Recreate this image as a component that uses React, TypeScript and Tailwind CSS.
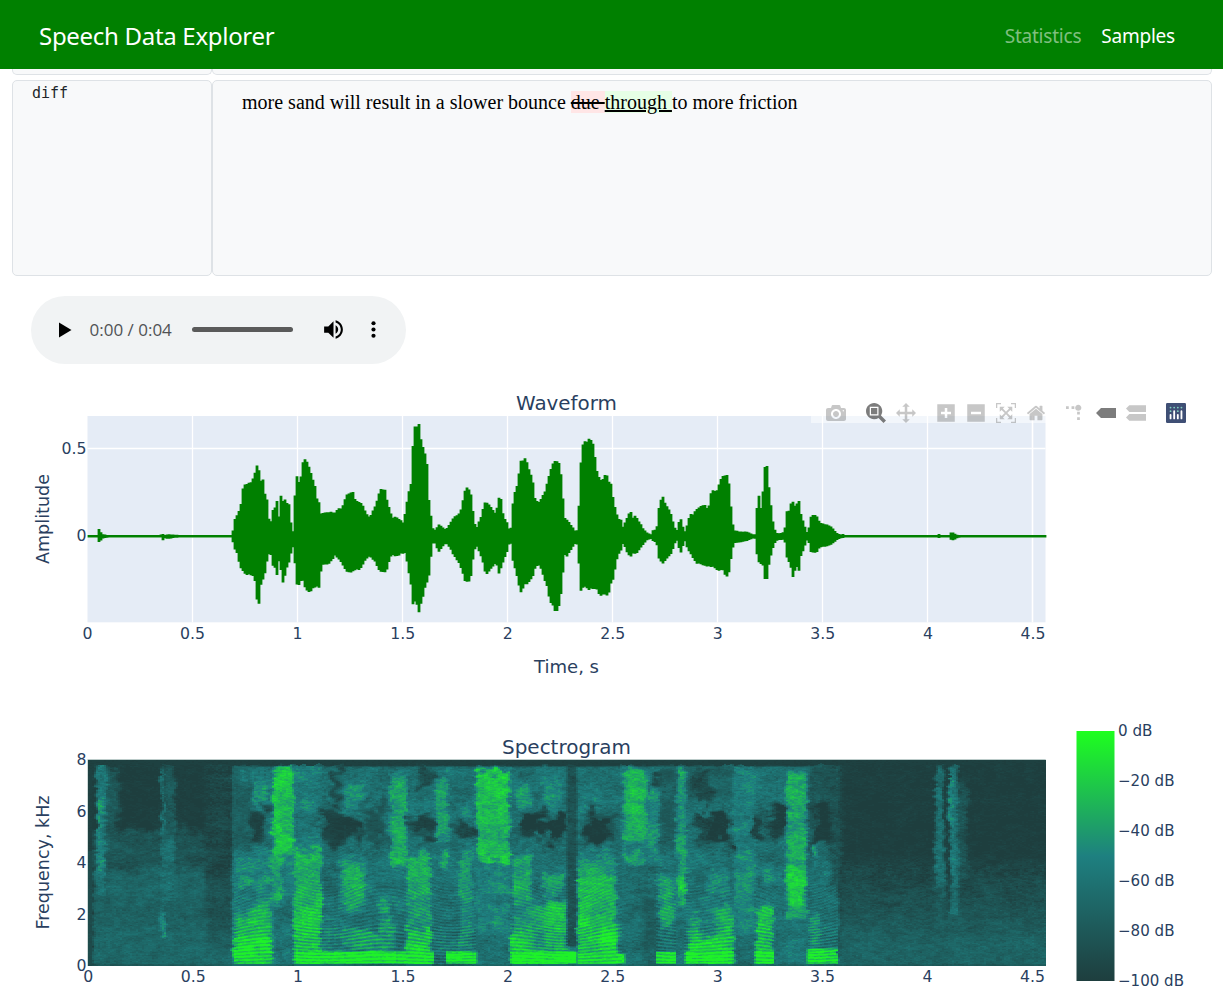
import { useMemo } from "react";

type Box = [number, number, number, number, number, number, number];

const PLOT_LEFT = 88;
const PLOT_RIGHT = 1046;
const INK = "#2a3f5f";
const PLOT_FONT = '"DejaVu Sans", Verdana, sans-serif';

/* Envelope of the signal: position, peak above zero, peak below zero (thirds of a pixel). */
const ENVELOPE = [
  -396, 3, 3, -369, 3, 3, -366, 22, 14, -359, 22, 20, -356, 7, 8, -345, 5, 5, -330, 3, 3, -178, 3, 3, -175, 9, 6, -172, 7, 13, -165, 4, 6, -155, 6, 8, -140, 5, 5, -110, 3, 3,
  0, 3, 3, 36, 3, 3, 38, 8, 12, 42, 46, 35, 50, 60, 45, 62, 85, 95, 68, 140, 100, 76, 155, 112, 88, 160, 115, 98, 168, 115, 104, 180, 120, 108, 212, 180, 115, 218, 205, 119, 175, 190,
  122, 168, 150, 130, 172, 125, 136, 115, 105, 142, 110, 70, 148, 40, 50, 153, 45, 55, 156, 75, 85, 164, 80, 88, 168, 105, 110, 173, 105, 120, 177, 60, 75, 183, 118, 100, 187, 120, 150,
  192, 85, 120, 196, 115, 115, 200, 100, 92, 206, 105, 85, 210, 60, 55, 217, 15, 45, 221, 15, 20, 226, 145, 95, 230, 178, 140, 235, 170, 158, 240, 155, 130, 248, 215, 132, 257, 228, 155,
  264, 210, 162, 270, 205, 170, 276, 175, 160, 283, 160, 150, 290, 115, 152, 297, 100, 150, 300, 68, 115, 310, 68, 82, 322, 72, 85, 335, 72, 72, 345, 70, 58, 355, 82, 65, 366, 85, 80,
  372, 100, 90, 378, 120, 102, 390, 130, 107, 400, 130, 103, 406, 108, 100, 420, 102, 98, 428, 92, 85, 436, 75, 70, 445, 58, 60, 452, 62, 62, 460, 80, 70, 468, 95, 80, 476, 125, 98,
  483, 140, 107, 495, 140, 107, 502, 105, 95, 510, 75, 65, 518, 55, 55, 525, 58, 58, 535, 53, 60, 545, 45, 50, 550, 40, 52, 556, 70, 50, 562, 110, 80, 568, 140, 115, 574, 160, 150,
  578, 230, 200, 580, 310, 208, 586, 325, 195, 592, 330, 205, 598, 330, 228, 603, 290, 200, 610, 260, 175, 616, 240, 150, 622, 205, 138, 627, 110, 115, 633, 60, 60, 640, 18, 15,
  648, 20, 25, 655, 35, 50, 660, 33, 40, 678, 20, 20, 690, 38, 35, 700, 55, 55, 715, 65, 75, 725, 85, 100, 733, 125, 125, 738, 145, 138, 748, 140, 135, 754, 120, 115, 760, 65, 60,
  768, 20, 25, 775, 40, 40, 785, 60, 65, 793, 100, 90, 797, 102, 120, 805, 98, 105, 817, 80, 90, 827, 68, 82, 833, 95, 90, 838, 122, 118, 843, 110, 95, 850, 60, 75, 860, 45, 50,
  868, 20, 20, 872, 12, 12, 878, 90, 70, 885, 130, 95, 892, 155, 120, 898, 195, 150, 902, 228, 165, 915, 228, 145, 922, 215, 140, 930, 195, 130, 938, 165, 120, 945, 115, 95,
  955, 97, 85, 965, 115, 100, 973, 130, 130, 980, 150, 145, 990, 190, 190, 998, 210, 205, 1005, 225, 220, 1013, 226, 225, 1020, 215, 200, 1026, 160, 145, 1031, 80, 85, 1035, 55, 55,
  1040, 50, 62, 1050, 38, 45, 1060, 25, 30, 1070, 10, 15, 1075, 50, 60, 1080, 150, 110, 1084, 240, 178, 1088, 265, 155, 1095, 288, 150, 1105, 285, 160, 1117, 285, 155, 1125, 240, 157,
  1132, 190, 155, 1138, 170, 172, 1148, 165, 175, 1157, 190, 175, 1165, 165, 178, 1173, 155, 138, 1180, 110, 125, 1188, 75, 80, 1195, 50, 55, 1202, 52, 45, 1210, 25, 20, 1218, 50, 40,
  1225, 62, 55, 1231, 80, 62, 1238, 55, 52, 1248, 62, 52, 1255, 45, 45, 1262, 38, 35, 1270, 22, 25, 1280, 12, 12, 1293, 6, 8, 1300, 20, 15, 1310, 18, 18, 1315, 75, 60, 1320, 102, 72,
  1329, 118, 82, 1336, 98, 72, 1345, 85, 62, 1355, 60, 50, 1363, 30, 25, 1370, 15, 10, 1376, 38, 30, 1381, 60, 58, 1386, 35, 35, 1395, 15, 15, 1402, 35, 35, 1410, 65, 50,
  1420, 65, 65, 1428, 80, 80, 1440, 88, 82, 1452, 95, 88, 1465, 80, 90, 1473, 130, 90, 1480, 140, 92, 1490, 135, 100, 1500, 165, 102, 1508, 180, 98, 1516, 180, 118, 1524, 185, 120,
  1530, 125, 90, 1536, 50, 45, 1542, 18, 20, 1560, 14, 18, 1580, 14, 14, 1600, 6, 6, 1608, 6, 8, 1612, 110, 70, 1618, 125, 78, 1622, 70, 80, 1626, 130, 85, 1632, 140, 90,
  1635, 210, 125, 1641, 212, 128, 1644, 165, 100, 1650, 125, 68, 1656, 60, 45, 1663, 22, 22, 1672, 8, 12, 1690, 12, 10, 1696, 30, 20, 1700, 75, 60, 1708, 75, 80, 1716, 112, 100,
  1721, 95, 132, 1728, 90, 80, 1736, 112, 110, 1742, 70, 60, 1750, 45, 42, 1760, 12, 12, 1766, 20, 15, 1774, 65, 50, 1790, 62, 48, 1800, 40, 32, 1820, 35, 30, 1835, 28, 24,
  1850, 10, 12, 1860, 5, 6, 1868, 7, 5, 1875, 3, 3, 2140, 3, 3, 2151, 3, 3, 2156, 8, 6, 2160, 3, 3, 2190, 4, 4, 2194, 14, 12, 2202, 9, 11, 2212, 4, 5, 2225, 3, 3, 2480, 3, 3,
];

/* Regions of the spectrogram: left, right, top, bottom, level, horizontal and vertical softness. */
const REGIONS: Box[] = [
  [93, 233, 830, 862, 0.17, 8, 8],
  [93, 233, 868, 970, 0.26, 4, 14],
  [110, 205, 868, 905, 0.3, 10, 8],
  [93, 233, 925, 970, 0.31, 4, 10],
  [205, 233, 760, 890, 0.07, 6, 6],
  [207, 232, 880, 940, 0.15, 6, 14],
  [98, 117, 765, 850, 0.2, 5, 6],
  [97, 106, 764, 892, 0.42, 3, 6],
  [98, 102, 800, 824, 0.6, 2, 4],
  [98, 104, 848, 875, 0.5, 2, 4],
  [166, 175, 766, 840, 0.2, 3, 6],
  [162, 175, 835, 900, 0.36, 3, 6],
  [161, 165, 768, 938, 0.36, 2, 6],
  [161, 165, 914, 932, 0.56, 2, 4],
  [233, 838, 766, 972, 0.37, 3, 3],
  [233, 256, 766, 850, 0.26, 3, 8],
  [233, 272, 850, 970, 0.46, 3, 6],
  [243, 270, 772, 790, 0.42, 4, 4],
  [253, 268, 787, 806, 0.56, 4, 5],
  [253, 267, 808, 840, 0.04, 5, 7],
  [240, 270, 876, 890, 0.58, 4, 5],
  [236, 272, 915, 972, 0.65, 6, 8],
  [250, 272, 905, 940, 0.72, 8, 8],
  [233, 272, 940, 964, 0.86, 2, 6],
  [273, 294, 764, 866, 0.76, 3, 5],
  [271, 282, 855, 905, 0.64, 3, 8],
  [282, 294, 855, 900, 0.48, 3, 8],
  [294, 322, 764, 850, 0.44, 4, 6],
  [294, 322, 850, 970, 0.68, 3, 6],
  [294, 322, 905, 950, 0.76, 3, 6],
  [322, 342, 765, 970, 0.35, 3, 6],
  [322, 342, 918, 970, 0.48, 3, 6],
  [322, 343, 806, 842, 0.05, 6, 6],
  [335, 360, 818, 837, 0.02, 6, 5],
  [330, 340, 768, 800, 0.1, 5, 6],
  [344, 365, 785, 808, 0.55, 4, 6],
  [340, 365, 858, 906, 0.64, 5, 8],
  [340, 396, 928, 950, 0.62, 4, 6],
  [365, 385, 804, 840, 0.15, 6, 6],
  [378, 390, 895, 950, 0.6, 4, 8],
  [390, 407, 773, 865, 0.64, 3, 5],
  [407, 430, 853, 900, 0.66, 3, 6],
  [407, 431, 900, 970, 0.58, 3, 6],
  [406, 432, 928, 964, 0.82, 3, 5],
  [413, 434, 816, 838, 0.04, 6, 5],
  [416, 434, 765, 784, 0.1, 5, 5],
  [436, 449, 772, 840, 0.6, 3, 5],
  [436, 449, 854, 866, 0.62, 3, 4],
  [457, 473, 820, 839, 0.06, 6, 5],
  [460, 473, 850, 950, 0.55, 4, 6],
  [461, 472, 798, 812, 0.53, 4, 5],
  [476, 510, 768, 861, 0.75, 3, 4],
  [476, 510, 862, 930, 0.5, 3, 6],
  [434, 446, 945, 970, 0.35, 3, 5],
  [478, 511, 938, 972, 0.34, 3, 8],
  [512, 532, 852, 905, 0.66, 4, 6],
  [516, 530, 785, 808, 0.54, 4, 6],
  [512, 567, 905, 965, 0.6, 3, 8],
  [543, 562, 771, 809, 0.54, 4, 6],
  [521, 572, 815, 830, -0.1, 6, 5],
  [545, 562, 826, 842, -0.1, 5, 5],
  [526, 536, 826, 840, 0.02, 4, 5],
  [542, 563, 872, 892, 0.63, 4, 6],
  [545, 566, 905, 950, 0.73, 6, 8],
  [512, 532, 936, 962, 0.8, 3, 6],
  [567, 577, 764, 946, 0.14, 3, 3],
  [578, 617, 852, 972, 0.56, 3, 10],
  [578, 615, 872, 965, 0.68, 3, 8],
  [579, 590, 900, 925, 0.82, 4, 6],
  [600, 618, 925, 960, 0.84, 5, 6],
  [583, 612, 814, 842, 0, 6, 6],
  [580, 600, 795, 808, 0.52, 5, 5],
  [623, 647, 769, 862, 0.64, 4, 5],
  [630, 644, 787, 830, 0.73, 4, 6],
  [625, 658, 840, 852, 0.42, 4, 5],
  [623, 656, 864, 972, 0.35, 4, 6],
  [647, 659, 790, 860, 0.54, 4, 8],
  [648, 665, 767, 783, 0.1, 5, 4],
  [644, 656, 897, 950, 0.24, 5, 8],
  [659, 676, 764, 850, 0.24, 4, 8],
  [658, 674, 875, 930, 0.61, 4, 8],
  [677, 686, 768, 906, 0.6, 3, 6],
  [679, 686, 872, 900, 0.72, 3, 5],
  [687, 733, 764, 800, 0.27, 4, 6],
  [695, 712, 766, 806, 0.06, 6, 6],
  [698, 732, 814, 843, 0.07, 7, 6],
  [712, 731, 816, 841, -0.08, 5, 5],
  [708, 728, 873, 892, 0.55, 5, 6],
  [687, 733, 904, 960, 0.48, 4, 6],
  [690, 700, 915, 950, 0.68, 5, 8],
  [716, 733, 908, 960, 0.72, 6, 10],
  [690, 733, 938, 963, 0.78, 4, 6],
  [734, 755, 765, 936, 0.47, 3, 6],
  [736, 752, 850, 930, 0.54, 4, 8],
  [734, 755, 938, 972, 0.33, 3, 6],
  [756, 766, 814, 842, 0.05, 4, 6],
  [769, 782, 804, 842, 0.02, 4, 6],
  [762, 782, 870, 886, 0.57, 4, 6],
  [756, 773, 905, 965, 0.72, 3, 8],
  [774, 786, 910, 972, 0.33, 3, 6],
  [786, 807, 771, 922, 0.62, 3, 5],
  [788, 805, 865, 902, 0.8, 4, 6],
  [786, 807, 925, 970, 0.38, 3, 5],
  [808, 838, 764, 860, 0.18, 4, 6],
  [814, 834, 803, 843, -0.05, 5, 5],
  [813, 820, 842, 858, 0.57, 3, 4],
  [818, 840, 845, 860, 0.3, 4, 5],
  [830, 840, 760, 910, 0.14, 8, 12],
  [808, 838, 890, 970, 0.38, 6, 8],
  [810, 820, 916, 945, 0.56, 3, 6],
  [295, 397, 951, 963, 0.9, 2, 2],
  [397, 434, 951, 963, 0.88, 2, 2],
  [446, 477, 951, 963, 0.88, 2, 2],
  [511, 577, 951, 963, 0.92, 2, 2],
  [578, 625, 953, 963, 0.88, 2, 3],
  [656, 676, 951, 963, 0.88, 2, 2],
  [685, 733, 951, 963, 0.9, 2, 2],
  [755, 774, 950, 963, 0.88, 2, 2],
  [807, 838, 948, 963, 0.88, 3, 3],
  [838, 842, 957, 964, 0.6, 3, 3],
  [842, 1050, 870, 972, 0.12, 6, 30],
  [840, 1050, 912, 972, 0.22, 4, 24],
  [840, 1050, 936, 972, 0.28, 4, 12],
  [935, 944, 765, 892, 0.36, 3, 5],
  [936, 943, 890, 940, 0.24, 3, 8],
  [950, 967, 780, 875, 0.18, 4, 12],
  [950, 958, 764, 918, 0.38, 3, 5],
  [950, 953, 775, 822, 0.54, 2, 5],
  [950, 955, 850, 870, 0.45, 2, 5],
];

const VOICED: [number, number][] = [
  [235, 272], [293, 475], [511, 567], [578, 622], [657, 676], [685, 733], [755, 774], [808, 838],
];

function hash(a: number, b: number) {
  let h = Math.imul(a + 1013, 374761393) ^ Math.imul(b + 77, 668265263);
  h = Math.imul(h ^ (h >>> 13), 1274126177);
  return ((h ^ (h >>> 16)) >>> 0) / 4294967296;
}

function smoothNoise(x: number, y: number) {
  const xi = Math.floor(x), yi = Math.floor(y);
  const fx = x - xi, fy = y - yi;
  const top = hash(xi, yi) * (1 - fx) + hash(xi + 1, yi) * fx;
  const low = hash(xi, yi + 1) * (1 - fx) + hash(xi + 1, yi + 1) * fx;
  return top * (1 - fy) + low * fy;
}

function ramp(d: number, soft: number) {
  const t = Math.max(0, Math.min(1, d / soft + 0.5));
  return t * t * (3 - 2 * t);
}

function levelColor(t: number) {
  const mix = (a: number, b: number, k: number) => Math.round(a + (b - a) * k);
  if (t < 0.5) {
    const k = t * 2;
    return `rgb(30,${mix(62, 128, k)},${mix(62, 128, k)})`;
  }
  const k = t * 2 - 1;
  return `rgb(30,${mix(128, 255, k)},${mix(128, 30, k)})`;
}

const LEVELS = 40;

function buildSpectrogram() {
  const paths: string[] = Array.from({ length: LEVELS + 1 }, () => "");
  for (let y = 0; y < 206; y++) {
    let start = 0;
    let last = -1;
    for (let c = 0; c <= 479; c++) {
      let q = -2;
      if (c < 479) {
        const px = PLOT_LEFT + c * 2 + 1;
        const py = 760 + y;
        const nx = smoothNoise(px / 9 + 20, py / 8) - 0.5;
        const ny = smoothNoise(px / 8 + 90, py / 7 + 40) - 0.5;
        const wx = px + (smoothNoise(px / 4, py / 2) - 0.5) * 5;
        const wy = py + (smoothNoise(px / 4 + 50, py / 3) - 0.5) * 9;
        let v = 0.01;
        for (const [l, r, t, b, level, sx0, sy0] of REGIONS) {
          if (px < l - 16 || px > r + 16) continue;
          const flat = sy0 <= 3;
          const patch = level < 0.2 && sy0 > 3 && r < 838 && l > 233;
          const sx = sx0 <= 3 ? sx0 + (flat ? 0 : 2) : sx0 * 1.7;
          const sy = flat ? sy0 : sy0 * 2;
          const xx = flat ? px : wx + (patch ? nx * 16 : nx * 4);
          const yy = flat ? py : wy + (patch ? ny * 20 : ny * 12);
          const m = ramp(xx - l, sx) * ramp(r - xx, sx) * ramp(yy - t, sy) * ramp(b - yy, sy);
          v += (level - v) * m;
        }
        v = Math.max(0, v);
        const fine = hash(c, y) - 0.5;
        const mid = smoothNoise(c / 1.6, y / 1.5 + 300) - 0.5;
        const wide = smoothNoise(c / 5, y / 6 + 900) - 0.5;
        const broad = smoothNoise(c / 9 + 700, y / 14 + 100) - 0.5;
        const gain = v < 0.05 ? 0.3 : v < 0.33 ? 0.7 : 1;
        v += (fine * 0.1 + mid * 0.19 + wide * 0.14) * gain;
        if (px > 235 && px < 836 && v > 0.2) v += broad * 0.14;
        if (py > 845 && VOICED.some(([l, r]) => px >= l && px <= r)) {
          const spacing = 3.35 + 0.35 * Math.sin(px / 19) + 0.2 * Math.sin(px / 47);
          const strength = py > 925 ? 0.12 : py > 885 ? 0.06 : 0.025;
          v += Math.cos(((966 - py) / spacing) * 6.2832) * strength;
        }
        const ceiling = 764 + (smoothNoise(px / 4, 7) - 0.5) * 4;
        if (py < ceiling || px < 93) v = 0.02 + fine * 0.03 + (px < 93 && py > 850 ? 0.08 : 0);
        if (py > 963) v = Math.min(v, 0.45) * 0.75;
        q = Math.round(Math.max(0, Math.min(0.95, v)) * LEVELS);
      }
      if (q !== last) {
        if (last >= 0) paths[last] += `M${start * 2} ${y}h${(c - start) * 2}v1h${(start - c) * 2}z`;
        start = c;
        last = q;
      }
    }
  }
  return paths;
}

function buildWaveform() {
  let d = "";
  let i = 0;
  for (let x = PLOT_LEFT; x < PLOT_RIGHT - 1; x += 2) {
    const pos = (x + 1 - 220) * 3;
    while (i + 3 < ENVELOPE.length - 3 && ENVELOPE[i + 3] < pos) i += 3;
    const k = Math.max(0, Math.min(1, (pos - ENVELOPE[i]) / (ENVELOPE[i + 3] - ENVELOPE[i])));
    const up = ENVELOPE[i + 1] + (ENVELOPE[i + 4] - ENVELOPE[i + 1]) * k;
    const down = ENVELOPE[i + 2] + (ENVELOPE[i + 5] - ENVELOPE[i + 2]) * k;
    const a = Math.max(1.2, (up / 3) * (0.99 + hash(x, 1) * 0.04));
    const b = Math.max(1.2, (down / 3) * (0.99 + hash(x, 2) * 0.04));
    d += `M${x - 0.4} ${(536.3 - a).toFixed(1)}h2.8v${(a + b).toFixed(1)}h-2.8z`;
  }
  return d;
}

function Label({ x, y, size = 15, length, anchor = "middle", rotate, children }: {
  x: number; y: number; size?: number; length?: number; anchor?: "start" | "middle" | "end"; rotate?: boolean; children: string;
}) {
  return (
    <text x={x} y={y} fontSize={size} textAnchor={anchor} fill={INK} fontFamily={PLOT_FONT} textLength={length}
      lengthAdjust="spacingAndGlyphs" transform={rotate ? `rotate(-90 ${x} ${y})` : undefined}>
      {children}
    </text>
  );
}

const TICKS = ["0", "0.5", "1", "1.5", "2", "2.5", "3", "3.5", "4", "4.5"];

function Waveform() {
  const d = useMemo(buildWaveform, []);
  return (
    <svg className="block h-[320px] w-[1223px] shrink-0" viewBox="0 380 1223 320">
      <rect x={87.5} y={416} width={958} height={206.3} fill="#e5ecf6" />
      {TICKS.slice(1).map((t, i) => (
        <path key={t} d={`M${192.5 + i * 105} 416V622.3`} stroke="#fff" strokeWidth={i === 8 ? 1.6 : 1.3} />
      ))}
      <path d="M87.5 448.5H1045.5" stroke="#fff" strokeWidth={1.3} />
      <path d="M87.5 536.5H1045.5" stroke="#fff" strokeWidth={2} />
      <path d={d} fill="#008000" />
      <Label x={566.5} y={409.5} size={20} length={101}>Waveform</Label>
      <Label x={86.5} y={454} length={25} anchor="end">0.5</Label>
      <Label x={86.5} y={541} length={10} anchor="end">0</Label>
      <Label x={49} y={519} size={17} length={90} rotate>Amplitude</Label>
      {TICKS.map((t, i) => (
        <Label key={t} x={87.5 + i * 105.05} y={639} length={t.length > 1 ? 25 : 10}>{t}</Label>
      ))}
      <Label x={566.5} y={673} size={18} length={65}>Time, s</Label>
    </svg>
  );
}

function Spectrogram() {
  const paths = useMemo(buildSpectrogram, []);
  return (
    <svg className="block h-[291px] w-[1223px] shrink-0" viewBox="0 700 1223 291">
      <defs>
        <linearGradient id="scale" x1="0" y1="0" x2="0" y2="1">
          <stop offset="0" stopColor="rgb(30,255,30)" />
          <stop offset="0.5" stopColor="rgb(30,128,128)" />
          <stop offset="1" stopColor="rgb(30,62,62)" />
        </linearGradient>
      </defs>
      <rect x={87.5} y={759.3} width={958.2} height={206.7} fill="#9fb5b3" />
      <g transform="translate(88 760) scale(0.9995 1)" shapeRendering="crispEdges">
        {paths.map((p, i) => (p ? <path key={i} d={p} fill={levelColor(i / LEVELS)} /> : null))}
      </g>
      <Label x={566.5} y={753.5} size={20} length={129}>Spectrogram</Label>
      {["8", "6", "4", "2", "0"].map((t, i) => (
        <Label key={t} x={86.5} y={765 + i * 51.5} length={10} anchor="end">{t}</Label>
      ))}
      <Label x={49} y={862.5} size={17} length={134} rotate>Frequency, kHz</Label>
      {TICKS.map((t, i) => (
        <Label key={t} x={88.3 + i * 104.9} y={982} length={t.length > 1 ? 25 : 10}>{t}</Label>
      ))}
      <rect x={1076.5} y={731} width={38} height={250} fill="url(#scale)" />
      {["0 dB", "−20 dB", "−40 dB", "−60 dB", "−80 dB", "−100 dB"].map((t, i) => (
        <Label key={t} x={1118} y={736 + i * 50} length={i === 0 ? 34.5 : i === 5 ? 66 : 56.5} anchor="start">{t}</Label>
      ))}
    </svg>
  );
}

const FLIP = "matrix(1 0 0 -1 0 850)";
const ICONS = {
  camera: [1000, "m500 450c-83 0-150-67-150-150 0-83 67-150 150-150 83 0 150 67 150 150 0 83-67 150-150 150z m400 150h-120c-16 0-34 13-39 29l-31 93c-6 15-23 28-40 28h-340c-16 0-34-13-39-28l-31-94c-6-15-23-28-40-28h-120c-55 0-100-45-100-100v-450c0-55 45-100 100-100h800c55 0 100 45 100 100v450c0 55-45 100-100 100z m-400-550c-138 0-250 112-250 250 0 138 112 250 250 250 138 0 250-112 250-250 0-138-112-250-250-250z m365 380c-19 0-35 16-35 35 0 19 16 35 35 35 19 0 35-16 35-35 0-19-16-35-35-35z"],
  zoom: [1000, "m1000-25l-250 251c40 63 63 138 63 218 0 224-182 406-407 406-224 0-406-182-406-406s183-406 407-406c80 0 155 22 218 62l250-250 125 125z m-812 250l0 438 437 0 0-438-437 0z m62 375l313 0 0-312-313 0 0 312z"],
  pan: [1000, "m1000 350l-187 188 0-125-250 0 0 250 125 0-188 187-187-187 125 0 0-250-250 0 0 125-188-188 186-187 0 125 252 0 0-250-125 0 187-188 188 188-125 0 0 250 250 0 0-126 187 188z"],
  plus: [875, "m1 787l0-875 875 0 0 875-875 0z m687-500l-187 0 0-187-125 0 0 187-188 0 0 125 188 0 0 187 125 0 0-187 187 0 0-125z"],
  minus: [875, "m0 788l0-876 875 0 0 876-875 0z m688-500l-500 0 0 125 500 0 0-125z"],
  autoscale: [1000, "m250 850l-187 0-63 0 0-62 0-188 63 0 0 188 187 0 0 62z m688 0l-188 0 0-62 188 0 0-188 62 0 0 188 0 62-62 0z m-875-938l0 188-63 0 0-188 0-62 63 0 187 0 0 62-187 0z m875 188l0-188-188 0 0-62 188 0 62 0 0 62 0 188-62 0z m-125 188l-1 0-93-94-156 156 156 156 92-93 2 0 0 250-250 0 0-2 93-92-156-156-156 156 94 92 0 2-250 0 0-250 0 0 93 93 157-156-157-156-93 94 0 0 0-250 250 0 0 0-94 93 156 157 156-157-93-93 0 0 250 0 0 250z"],
  home: [928.6, "m786 296v-267q0-15-11-26t-25-10h-214v214h-143v-214h-214q-15 0-25 10t-11 26v267q0 1 0 2t0 2l321 264 321-264q1-1 1-4z m124 39l-34-41q-5-5-12-6h-2q-7 0-12 3l-386 322-386-322q-7-4-13-4-7 2-12 7l-35 41q-4 5-3 13t6 12l401 334q18 15 42 15t43-15l136-114v109q0 8 5 13t13 5h107q8 0 13-5t5-13v-227l122-102q5-5 6-12t-4-13z"],
  spike: [1000, "M512 409c0-57-46-104-103-104-57 0-104 47-104 104 0 57 47 103 104 103 57 0 103-46 103-103z m-327-39l92 0 0 92-92 0z m-185 0l92 0 0 92-92 0z m370-186l92 0 0 93-92 0z m0-184l92 0 0 92-92 0z"],
  closest: [1500, "m375 725l0 0-375-375 375-374 0-1 1125 0 0 750-1125 0z"],
  compare: [1125, "m187 786l0 2-187-188 188-187 0 0 937 0 0 373-938 0z m0-499l0 1-187-188 188-188 0 0 937 0 0 376-938-1z"],
} as const;

function ModeButton({ name, active }: { name: keyof typeof ICONS; active?: boolean }) {
  const [width, path] = ICONS[name];
  return (
    <span className="flex h-5 w-[30px] items-center justify-center">
      <svg className="size-5" viewBox={`0 0 ${width} 1000`} fill={active ? "rgba(68,68,68,0.7)" : "rgba(68,68,68,0.3)"}>
        <path d={path} transform={name === "spike" ? "matrix(1.5 0 0 -1.5 0 850)" : FLIP} />
      </svg>
    </span>
  );
}

function ModeBar() {
  return (
    <div className="absolute top-[23px] left-[811px] flex h-5 w-[380px] bg-white/50">
      <div className="flex pl-2.5"><ModeButton name="camera" /></div>
      <div className="flex pl-2.5"><ModeButton name="zoom" active /><ModeButton name="pan" /></div>
      <div className="flex pl-2.5">
        <ModeButton name="plus" /><ModeButton name="minus" /><ModeButton name="autoscale" /><ModeButton name="home" />
      </div>
      <div className="flex pl-2.5">
        <ModeButton name="spike" /><ModeButton name="closest" active /><ModeButton name="compare" />
      </div>
      <div className="flex pl-[15px]">
        <svg className="size-5" viewBox="0 0 132 132">
          <rect width="132" height="132" rx="8" fill="#3f4f75" />
          <g fill="#80cfbe">
            <circle cx="30" cy="30" r="6" /><circle cx="54" cy="30" r="6" /><circle cx="78" cy="30" r="6" />
            <circle cx="102" cy="30" r="6" /><circle cx="30" cy="54" r="6" /><circle cx="78" cy="54" r="6" />
          </g>
          <path d="M30 78v24M54 54v48M78 78v24M102 54v48" stroke="#fff" strokeWidth="12" strokeLinecap="round" />
        </svg>
      </div>
    </div>
  );
}

function AudioPlayer() {
  return (
    <div className="mt-5 ml-[31px] flex h-[68px] w-[375px] shrink-0 items-center rounded-full bg-[#f1f3f4] pb-px">
      <svg className="ml-[27px] h-4 w-3.5 shrink-0" viewBox="0 0 14 16"><path d="M1 0.5 13.5 8 1 15.5z" fill="#000" /></svg>
      <span className="ml-[17.5px] w-[84px] whitespace-nowrap font-['Open_Sans','Noto_Sans',sans-serif] text-[17px] leading-5 text-[#505254]">0:00 / 0:04</span>
      <span className="ml-[18px] h-[5px] w-[101px] shrink-0 rounded-full bg-[#5a5a5a]" />
      <svg className="ml-[28px] size-[25px] shrink-0" viewBox="0 0 24 24">
        <path d="M3 9v6h4l5 5V4L7 9H3zm13.5 3c0-1.77-1.02-3.29-2.5-4.03v8.05c1.48-.73 2.5-2.25 2.5-4.02zM14 3.23v2.06c2.89.86 5 3.54 5 6.71s-2.11 5.85-5 6.71v2.06c4.01-.91 7-4.49 7-8.77s-2.99-7.86-7-8.77z" />
      </svg>
      <svg className="ml-[15px] size-[25px] shrink-0" viewBox="0 0 24 24">
        <circle cx="12" cy="6" r="2" /><circle cx="12" cy="12" r="2" /><circle cx="12" cy="18" r="2" />
      </svg>
    </div>
  );
}

export default function App() {
  return (
    <div className="flex h-[991px] w-[1223px] flex-col overflow-hidden bg-white">
      <nav className="flex h-[69px] shrink-0 items-center justify-between bg-[#008000] pt-[3px] pr-12 pl-[39px] font-['Noto_Sans','Open_Sans',sans-serif] text-white">
        <span className="text-[24px] leading-8 tracking-[-0.3px]">Speech Data Explorer</span>
        <div className="flex gap-5 pb-px text-[19px] leading-7 tracking-[-0.22px]">
          <span className="text-white/50">Statistics</span>
          <span>Samples</span>
        </div>
      </nav>
      <div className="ml-3 flex h-1.5 w-[1200px] shrink-0">
        <div className="w-[200px] rounded-b-[5px] border border-t-0 border-[#dee2e6] bg-[#f8f9fa]" />
        <div className="flex-1 rounded-b-[5px] border border-t-0 border-[#dee2e6] bg-[#f8f9fa]" />
      </div>
      <div className="mt-[5px] ml-3 flex h-[196px] w-[1200px] shrink-0">
        <div className="w-[200px] rounded-[5px] border border-[#dee2e6] bg-[#f8f9fa] pt-0.5 pl-[19px] font-['DejaVu_Sans_Mono',monospace] text-[15px] leading-5 text-[#212529]">
          diff
        </div>
        <div className="flex-1 rounded-[5px] border border-[#dee2e6] bg-[#f8f9fa] pt-[10px] pl-[29px] font-['Liberation_Serif',serif] text-[20px] leading-[22px] text-black">
          <p className="whitespace-pre">
            more sand will result in a slower bounce <del className="bg-[#ffe6e6] decoration-2">due </del>
            <ins className="bg-[#e6ffe6] decoration-2">through </ins>to more friction
          </p>
        </div>
      </div>
      <AudioPlayer />
      <div className="relative mt-4 flex flex-col">
        <Waveform />
        <Spectrogram />
        <ModeBar />
      </div>
    </div>
  );
}
